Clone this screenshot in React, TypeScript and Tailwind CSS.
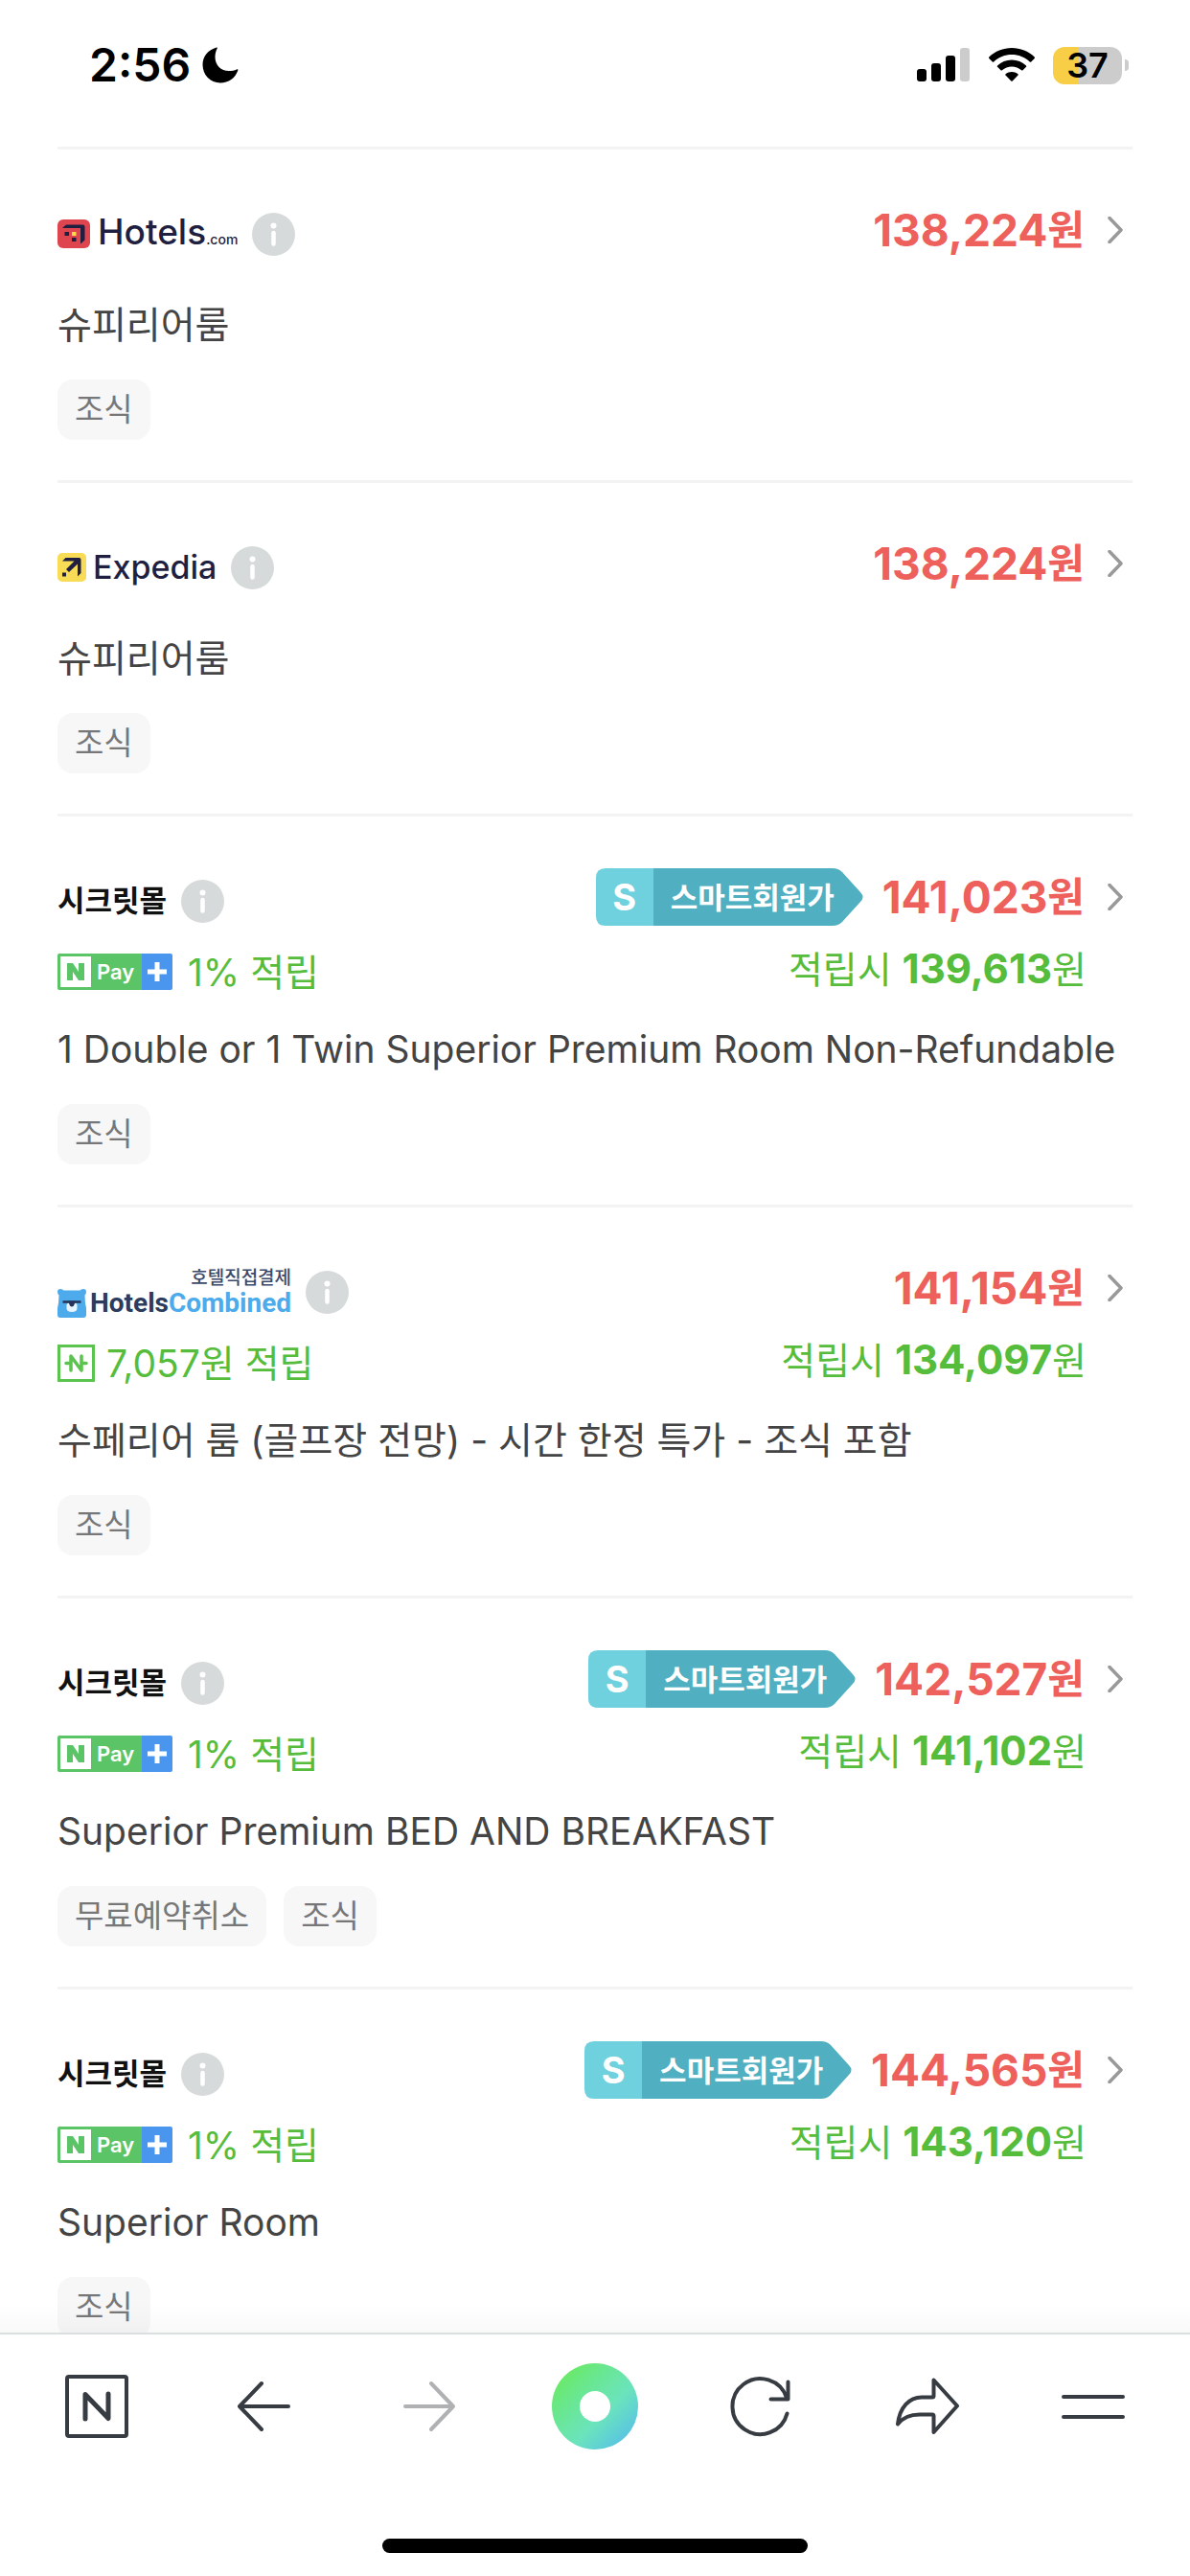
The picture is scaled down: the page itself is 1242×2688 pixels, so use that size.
import type { ReactNode } from "react";

type Offer = {
  id: number;
  seller: "hotels" | "expedia" | "secret" | "combined";
  price: string;
  smart?: boolean;
  reward?: { kind: "npay" | "point"; label: string; price: string };
  room: string;
  tags: string[];
};

const offers: Offer[] = [
  { id: 1, seller: "hotels", price: "138,224", room: "슈피리어룸", tags: ["조식"] },
  { id: 2, seller: "expedia", price: "138,224", room: "슈피리어룸", tags: ["조식"] },
  {
    id: 3,
    seller: "secret",
    price: "141,023",
    smart: true,
    reward: { kind: "npay", label: "1% 적립", price: "139,613" },
    room: "1 Double or 1 Twin Superior Premium Room Non-Refundable",
    tags: ["조식"],
  },
  {
    id: 4,
    seller: "combined",
    price: "141,154",
    reward: { kind: "point", label: "7,057원 적립", price: "134,097" },
    room: "수페리어 룸 (골프장 전망) - 시간 한정 특가 - 조식 포함",
    tags: ["조식"],
  },
  {
    id: 5,
    seller: "secret",
    price: "142,527",
    smart: true,
    reward: { kind: "npay", label: "1% 적립", price: "141,102" },
    room: "Superior Premium BED AND BREAKFAST",
    tags: ["무료예약취소", "조식"],
  },
  {
    id: 6,
    seller: "secret",
    price: "144,565",
    smart: true,
    reward: { kind: "npay", label: "1% 적립", price: "143,120" },
    room: "Superior Room",
    tags: ["조식"],
  },
];

function StatusBar() {
  return (
    <header className="flex h-[153px] shrink-0 items-start justify-between pt-10 pr-16 pl-[93px] text-black">
      <div className="flex h-14 items-center gap-3">
        <span className="text-[48px] leading-none font-semibold">2:56</span>
        <svg className="h-[38px] w-[38px]" viewBox="0 0 38 38" aria-hidden="true">
          <path d="M15 0.5C6 3 0.5 10 0.5 18.500C0.500 29 8.500 37.500 19 37.500C27.500 37.500 34.500 32.500 37.300 24.500C37.600 23.500 37 23 36 23.400C33.500 24.500 31 25 28 25C19.500 25 13.500 19 13.500 10.500C13.500 7.500 14.200 4.500 15.600 1.800C16 0.900 15.800 0.300 15 0.500Z" />
        </svg>
      </div>
      <div className="flex h-14 items-center">
        <svg className="h-9 w-[56px]" viewBox="0 0 56 36" aria-hidden="true">
          <rect x="0" y="22" width="10" height="13" rx="3" />
          <rect x="15" y="16" width="10" height="19" rx="3" />
          <rect x="30" y="8" width="10" height="27" rx="3" />
          <rect x="45" y="0" width="10" height="35" rx="3" fill="#ccc" />
        </svg>
        <svg className="ml-[19px] h-9 w-12" viewBox="0 0 48 36" aria-hidden="true">
          <path d="M24 0C33 0 41.500 3.500 47.700 9.500C48.100 9.900 48.100 10.500 47.700 10.900L44.200 14.400C43.800 14.800 43.200 14.800 42.800 14.400C37.700 9.600 31.100 7 24 7C16.900 7 10.300 9.600 5.200 14.400C4.800 14.800 4.200 14.800 3.800 14.400L0.300 10.900C-0.100 10.500-0.100 9.900 0.300 9.500C6.500 3.500 15 0 24 0Z" />
          <path d="M24 12.500C29.800 12.500 35 14.700 39 18.400C39.400 18.800 39.400 19.400 39 19.800L35.500 23.300C35.100 23.700 34.500 23.700 34.100 23.300C31.300 20.900 27.800 19.500 24 19.500C20.200 19.500 16.700 20.900 13.900 23.300C13.500 23.700 12.900 23.700 12.500 23.300L9 19.800C8.600 19.400 8.600 18.800 9 18.400C13 14.700 18.200 12.500 24 12.500Z" />
          <path d="M24 25C26.400 25 28.600 25.800 30.400 27.200C30.900 27.600 30.900 28.200 30.500 28.600L24.700 34.500C24.300 34.900 23.700 34.900 23.300 34.500L17.500 28.600C17.100 28.200 17.100 27.600 17.600 27.200C19.400 25.800 21.600 25 24 25Z" />
        </svg>
        <div className="ml-[19px] flex h-[39px] w-[72px] items-center justify-center rounded-xl bg-linear-to-r from-[#f7ce46] from-37% to-[#ccc] to-37% text-[36px] leading-none font-semibold">
          37
        </div>
        <span className="ml-[3px] h-3 w-1 rounded-r-full bg-[#ccc]" />
      </div>
    </header>
  );
}

function HotelsLogo() {
  return (
    <span className="flex items-center text-[#1f1f42]">
      <svg className="h-[30px] w-[34px]" viewBox="0 0 34 30" aria-hidden="true">
        <rect width="34" height="30" rx="6" fill="#de454f" />
        <path d="M5.500 8.500L9 5.500H26.500Q28.500 5.500 28.500 7.500V21.500L24 25.500V9H5.500Z" fill="#1f1f42" />
        <path d="M7.500 13h4.500v4h-4.500zM15 19h4.500v4H15z" fill="#1f1f42" />
        <path d="M15 13h4.500v4H15z" fill="#fdd848" />
      </svg>
      <span className="ml-2 flex items-baseline pt-1 leading-10">
        <span className="text-[37px] font-medium">Hotels</span>
        <span className="text-[14px] font-medium">.com</span>
      </span>
    </span>
  );
}

function ExpediaLogo() {
  return (
    <span className="flex items-center text-[#1f1f42]">
      <svg className="h-[30px] w-[30px]" viewBox="0 0 30 30" aria-hidden="true">
        <rect width="30" height="30" rx="5" fill="#f8dc55" />
        <path d="M5 8.500L8.500 5H22.500Q24.500 5 24.500 7V21L21 24.500V11.500L12 20L9 17L17.500 8.500Z" fill="#1f1f42" />
        <path d="M5 20.500h4v4h-4z" fill="#1f1f42" />
      </svg>
      <span className="ml-[7px] text-[34px] leading-10 font-medium">Expedia</span>
    </span>
  );
}

function CombinedLogo() {
  return (
    <span className="relative flex items-center pt-6">
      <svg className="h-[30px] w-[30px]" viewBox="0 0 30 30" aria-hidden="true">
        <path d="M0 3Q0 0 3 0Q5.500 0 6.500 1.500H23.500Q24.500 0 27 0Q30 0 30 3Q30 5.500 28.500 6.500Q28.500 14 30 20V27Q30 30 27 30H3Q0 30 0 27V20Q1.500 14 1.500 6.500Q0 5.500 0 3Z" fill="#4dabeb" />
        <path d="M9.500 17Q9.500 14 15 14Q20.500 14 20.500 17V20Q20.500 24 15 24Q9.500 24 9.500 20Z" fill="#e8f5fd" />
        <path d="M11 12.500H19L17 17.500Q15 19.500 13 17.500Z" fill="#263459" />
        <path d="M5.500 13.500h19" stroke="#263459" strokeWidth="2.500" />
      </svg>
      <span className="ml-1 font-['Roboto',sans-serif] text-[28px] leading-8 font-bold text-[#2d3b5f]">
        Hotels<span className="text-[#4dabeb]">Combined</span>
      </span>
      <span className="absolute top-0 right-0 text-[19px] leading-7 font-medium text-[#3b4a6b]">호텔직접결제</span>
    </span>
  );
}

function SellerLogo({ seller }: { seller: Offer["seller"] }) {
  if (seller === "hotels") return <HotelsLogo />;
  if (seller === "expedia") return <ExpediaLogo />;
  if (seller === "combined") return <CombinedLogo />;
  return <span className="text-[31px] leading-10 font-bold text-[#111]">시크릿몰</span>;
}

function InfoButton() {
  return (
    <button type="button" aria-label="정보" className="shrink-0">
      <svg className="h-[45px] w-[45px]" viewBox="0 0 45 45" aria-hidden="true">
        <circle cx="22.500" cy="22.500" r="22.500" fill="#d6dadb" />
        <circle cx="22.500" cy="13.500" r="3" fill="#fff" />
        <path d="M22.500 21v11.500" stroke="#fff" strokeWidth="4.500" strokeLinecap="round" />
      </svg>
    </button>
  );
}

function SmartBadge() {
  return (
    <span className="relative flex h-[60px] w-[279px] text-white">
      <svg className="absolute inset-0 h-full w-full" viewBox="0 0 279 60" aria-hidden="true">
        <path d="M60 0H10Q0 0 0 10V50Q0 60 10 60H60Z" fill="#6fd0de" />
        <path d="M60 0H247Q253 0 257 4L276 25Q281 30 276 35L257 56Q253 60 247 60H60Z" fill="#50afc1" />
      </svg>
      <span className="relative flex w-[60px] items-center justify-center text-[38px] leading-none font-bold">S</span>
      <span className="relative flex items-center pl-[18px] text-[31px] leading-none font-bold">스마트회원가</span>
    </span>
  );
}

function NPayBadge() {
  return (
    <span className="mr-4 flex h-[38px] w-[120px] shrink-0 overflow-hidden rounded-[2px] text-white">
      <span className="flex flex-1 items-center bg-[#5bc467] pl-[3px]">
        <svg className="h-8 w-8" viewBox="0 0 32 32" aria-hidden="true">
          <rect width="32" height="32" fill="#fff" />
          <path d="M10 25V7M22 25V7" stroke="#5bc467" strokeWidth="6" />
          <path d="M7 7H13L25 25H19Z" fill="#5bc467" />
        </svg>
        <span className="pl-[6px] text-[22px] leading-none font-semibold">Pay</span>
      </span>
      <span className="flex w-8 items-center justify-center bg-[#4a96ee]">
        <svg className="h-5 w-5" viewBox="0 0 20 20" aria-hidden="true">
          <path d="M10 0v20M0 10h20" stroke="#fff" strokeWidth="5" />
        </svg>
      </span>
    </span>
  );
}

function PointBadge() {
  return (
    <svg className="mr-3 h-[39px] w-[39px] shrink-0" viewBox="0 0 39 39" aria-hidden="true">
      <rect x="1.500" y="1.500" width="36" height="36" fill="none" stroke="#5bc44f" strokeWidth="3" />
      <path d="M14 27V12L25 27V12M9 19.500h4.500M25.500 19.500H30" fill="none" stroke="#5bc44f" strokeWidth="3.500" strokeLinecap="round" strokeLinejoin="round" />
    </svg>
  );
}

function OfferItem({ offer }: { offer: Offer }) {
  const { reward } = offer;
  return (
    <li className="mx-[60px] border-t-[3px] border-[#f3f3f3] pt-[54px] pb-[42px]">
      <div className="flex h-[78px] items-start justify-between">
        <div className="flex h-[60px] items-center gap-[15px] pt-2">
          <SellerLogo seller={offer.seller} />
          <InfoButton />
        </div>
        <a href="#offer" className="flex h-[60px] items-center">
          {offer.smart && <SmartBadge />}
          <span className="ml-5 flex items-center text-[#ed605b]">
            <strong className="text-[46px] leading-none font-bold">{offer.price}</strong>
            <span className="text-[42px] leading-none font-bold">원</span>
          </span>
          <svg className="mr-[10px] ml-6 h-7 w-4" viewBox="0 0 16 28" aria-hidden="true">
            <path d="M2 1.500L14 14L2 26.500" fill="none" stroke="#999" strokeWidth="3.500" strokeLinecap="round" strokeLinejoin="round" />
          </svg>
        </a>
      </div>
      {reward && (
        <div className="flex h-[60px] items-center justify-between pr-12 text-[39px] leading-none text-[#56bd3c]">
          <div className="flex items-center">
            {reward.kind === "npay" ? <NPayBadge /> : <PointBadge />}
            <span>{reward.label}</span>
          </div>
          <span className="pb-[6px]">
            적립시 <strong className="text-[42px] leading-none font-bold">{reward.price}</strong>원
          </span>
        </div>
      )}
      <p className="mt-[21px] text-[39px] leading-[60px] text-[#444]">{offer.room}</p>
      <ul className="mt-[27px] flex gap-[18px]">
        {offer.tags.map((tag) => (
          <li key={tag} className="rounded-[16px] bg-[#f7f7f7] px-[18px] text-[33px] leading-[63px] text-[#777]">
            {tag}
          </li>
        ))}
      </ul>
    </li>
  );
}

function NavButton({ label, children, disabled }: { label: string; children: ReactNode; disabled?: boolean }) {
  return (
    <button
      type="button"
      aria-label={label}
      disabled={disabled}
      className={`flex h-[90px] w-[90px] items-center justify-center ${disabled ? "text-[#b0b1b3]" : "text-[#373b42]"}`}
    >
      <svg
        className="h-[66px] w-[66px]"
        viewBox="0 0 66 66"
        fill="none"
        stroke="currentColor"
        strokeWidth="4"
        strokeLinecap="round"
        strokeLinejoin="round"
        aria-hidden="true"
      >
        {children}
      </svg>
    </button>
  );
}

function BottomBar() {
  return (
    <footer className="relative shrink-0 border-t-2 border-[#e1e4e7] bg-white">
      <div className="absolute inset-x-0 bottom-full h-8 bg-linear-to-b from-transparent to-[#5a7a5a]/5" />
      <nav className="flex justify-between px-14 pt-[30px]">
        <NavButton label="네이버 홈">
          <rect x="2" y="2" width="62" height="62" rx="2" />
          <path d="M21 46V20.500L45 45.500V20" strokeWidth="5" />
        </NavButton>
        <NavButton label="뒤로">
          <path d="M60 33H9M32 9L9 33L32 57" />
        </NavButton>
        <NavButton label="앞으로" disabled>
          <path d="M8 33H58M35 9L58 33L35 57" />
        </NavButton>
        <button
          type="button"
          aria-label="그린닷"
          className="flex h-[90px] w-[90px] items-center justify-center rounded-full bg-linear-135 from-[#6ae96b] from-15% via-[#6be3bc] via-60% to-[#55b4f0]"
        >
          <span className="h-8 w-8 rounded-full bg-white" />
        </button>
        <NavButton label="새로고침">
          <path d="M60.500 40.500A29 29 0 1 1 60 24M61.500 7.500V25.500H43.500" />
        </NavButton>
        <NavButton label="공유">
          <path d="M39.500 5.500L64 32.500L39.500 60V43Q39.500 41.500 38 41.500H25C14 41.500 7 45 2 51.500C4 34 14 23.500 27 23.500H38Q39.500 23.500 39.500 22Z" />
        </NavButton>
        <NavButton label="메뉴">
          <path d="M2 23H64M2 44H64" />
        </NavButton>
      </nav>
      <div className="mx-auto mt-[93px] mb-6 h-[15px] w-[444px] rounded-full bg-black" />
    </footer>
  );
}

export default function App() {
  return (
    <div className="flex h-screen flex-col overflow-hidden bg-white font-['Inter','Noto_Sans_CJK_KR',sans-serif]">
      <StatusBar />
      <main className="min-h-0 flex-1 overflow-hidden">
        <ul>
          {offers.map((offer) => (
            <OfferItem key={offer.id} offer={offer} />
          ))}
        </ul>
      </main>
      <BottomBar />
    </div>
  );
}
